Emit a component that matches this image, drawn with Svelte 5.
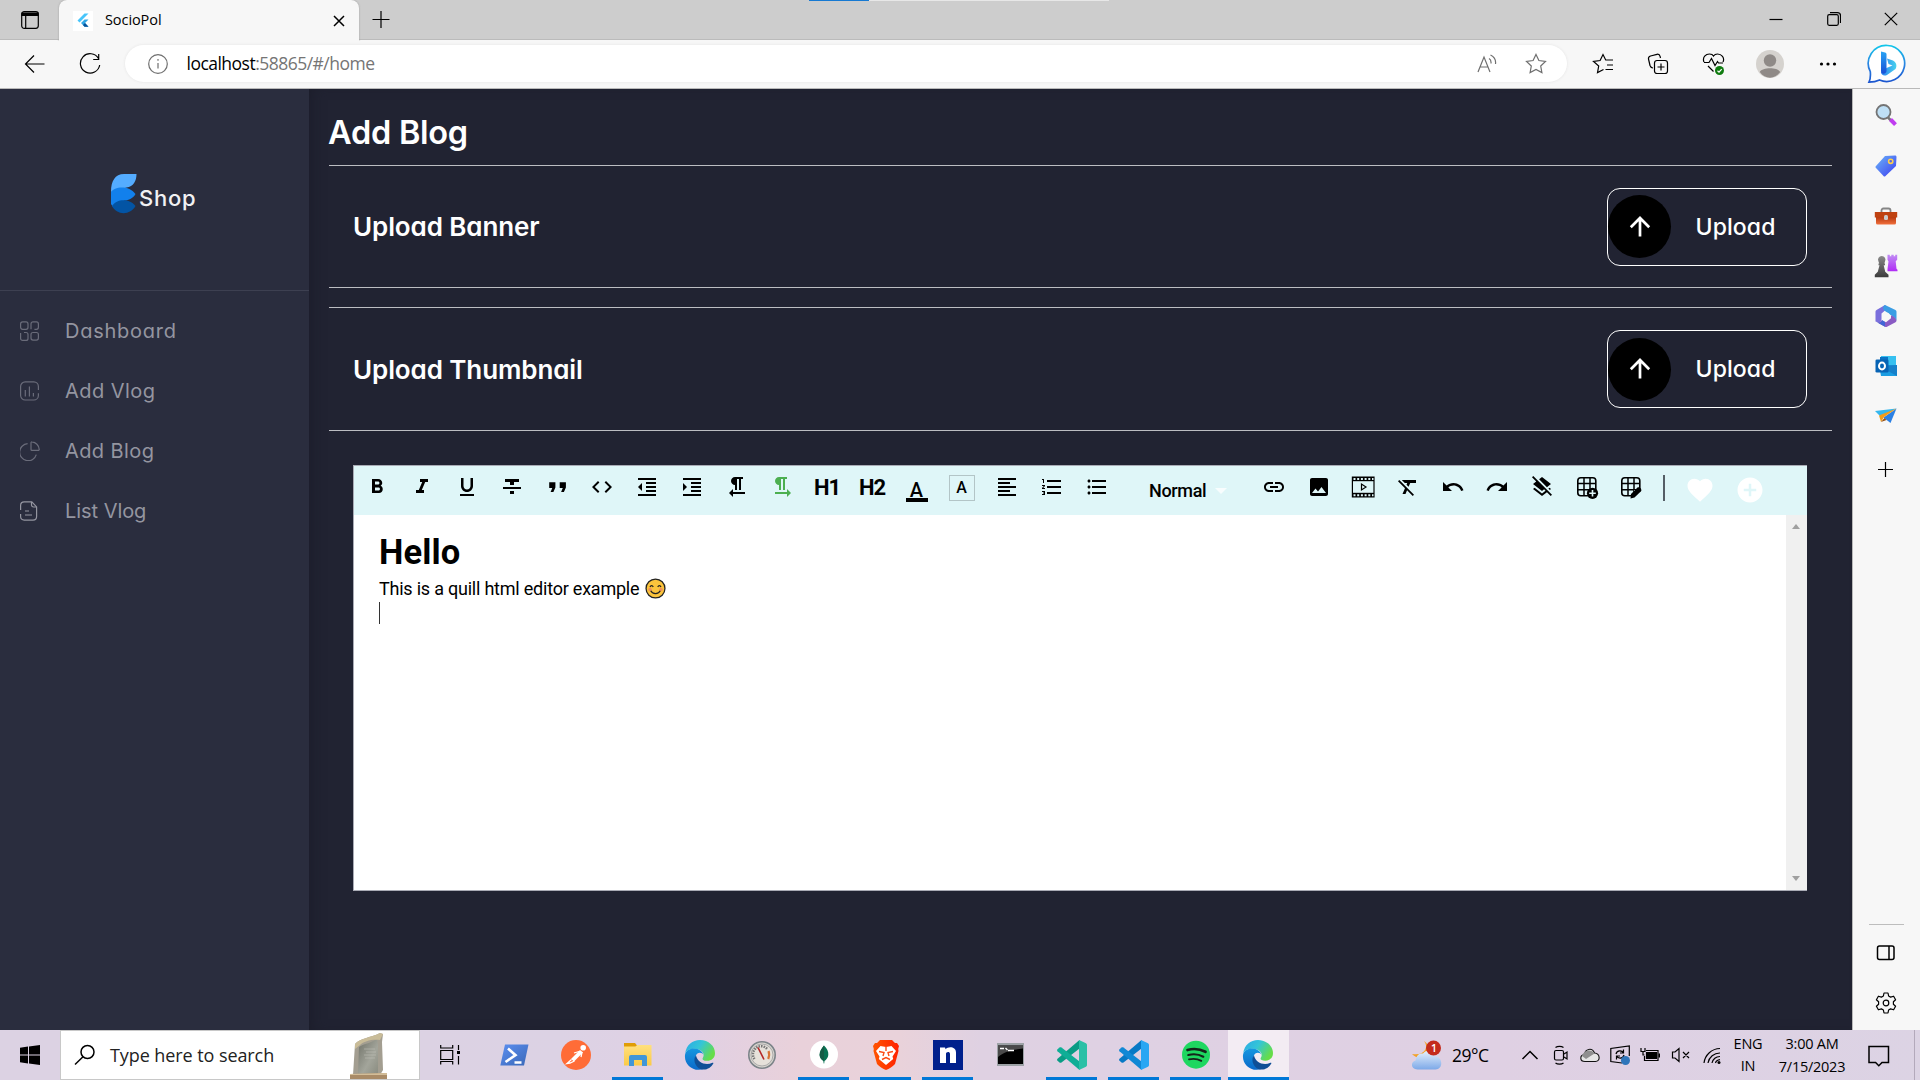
<script>
  const menu = [
    { label: 'Dashboard', icon: 'grid', track: 0.75 },
    { label: 'Add Vlog', icon: 'chart', track: 0.45 },
    { label: 'Add Blog', icon: 'pie', track: 0.4 },
    { label: 'List Vlog', icon: 'doc', track: -0.05 },
  ];

  const tools = [
    { d: 'M15.6 10.79c.97-.67 1.65-1.77 1.65-2.79 0-2.26-1.75-4-4-4H7v14h7.04c2.09 0 3.71-1.7 3.71-3.79 0-1.52-.86-2.82-2.15-3.42zM10 6.5h3c.83 0 1.5.67 1.5 1.5s-.67 1.5-1.5 1.5h-3v-3zm3.5 9H10v-3h3.5c.83 0 1.5.67 1.5 1.5s-.67 1.5-1.5 1.5z' },
    { d: 'M10 4v3h2.21l-3.42 8H6v3h8v-3h-2.21l3.42-8H18V4z' },
    { d: 'M12 17c3.31 0 6-2.69 6-6V3h-2.5v8c0 1.93-1.57 3.5-3.5 3.5S8.5 12.93 8.5 11V3H6v8c0 3.31 2.69 6 6 6zm-7 2v2h14v-2H5z' },
    { d: 'M10 19h4v-3h-4v3zM5 4v3h5v3h4V7h5V4H5zM3 14h18v-2H3v2z' },
    { d: 'M4.2 7.2h6.2v5.3l-2 4.500H5.600l1.700-4.100H4.200zM14.700 7.200h6.200v5.300l-2 4.500h-2.800l1.700-4.100h-3.100z' },
    { d: 'M9.4 16.6L4.8 12l4.6-4.6L8 6l-6 6 6 6 1.4-1.4zm5.2 0l4.6-4.6-4.6-4.6L16 6l6 6-6 6-1.4-1.4z' },
    { d: 'M11 17h10v-2H11v2zm-8-5l4 4V8l-4 4zm0 9h18v-2H3v2zM3 3v2h18V3H3zm8 6h10V7H11v2zm0 4h10v-2H11v2z' },
    { d: 'M3 21h18v-2H3v2zM3 8v8l4-4-4-4zm8 9h10v-2H11v2zM3 3v2h18V3H3zm8 6h10V7H11v2zm0 4h10v-2H11v2z' },
    { d: 'M10 10v5h2V4h2v11h2V4h2V2h-8C7.79 2 6 3.79 6 6s1.79 4 4 4zm-2 7v-3l-4 4 4 4v-3h12v-2H8z' },
    { d: 'M9 10v5h2V4h2v11h2V4h2V2H9C6.79 2 5 3.79 5 6s1.79 4 4 4zm12 8l-4-4v3H5v2h12v3l4-4z', green: true },
    { text: 'H1' },
    { text: 'H2' },
    { swatch: 'under' },
    { swatch: 'box' },
    { d: 'M15 15H3v2h12v-2zm0-8H3v2h12V7zM3 13h18v-2H3v2zm0 8h18v-2H3v2zM3 3v2h18V3H3z' },
    { d: 'M2 17h2v.5H3v1h1v.5H2v1h3v-4H2v1zm1-9h1V4H2v1h1v3zm-1 3h1.8L2 13.1v.9h3v-1H3.2L5 10.9V10H2v1zm5-6v2h14V5H7zm0 14h14v-2H7v2zm0-6h14v-2H7v2z' },
    { d: 'M4 10.5c-.83 0-1.5.67-1.5 1.5s.67 1.5 1.5 1.5 1.5-.67 1.5-1.5-.67-1.5-1.5-1.5zm0-6c-.83 0-1.5.67-1.5 1.5S3.17 7.5 4 7.5 5.5 6.83 5.5 6 4.83 4.5 4 4.5zm0 12c-.83 0-1.5.68-1.5 1.5s.68 1.5 1.5 1.5 1.5-.68 1.5-1.5-.67-1.5-1.5-1.5zM7 19h14v-2H7v2zm0-6h14v-2H7v2zm0-8v2h14V5H7z' },
  ];

  const tools2 = [
    { d: 'M3.9 12c0-1.71 1.39-3.1 3.1-3.1h4V7H7c-2.76 0-5 2.24-5 5s2.24 5 5 5h4v-1.9H7c-1.71 0-3.1-1.39-3.1-3.1zM8 13h8v-2H8v2zm9-6h-4v1.9h4c1.71 0 3.1 1.39 3.1 3.1s-1.39 3.1-3.1 3.1h-4V17h4c2.76 0 5-2.24 5-5s-2.24-5-5-5z' },
    { d: 'M21 19V5c0-1.1-.9-2-2-2H5c-1.1 0-2 .9-2 2v14c0 1.1.9 2 2 2h14c1.1 0 2-.9 2-2zM8.5 13.5l2.5 3.01L14.5 12l4.5 6H5l3.5-4.5z' },
    { icon: 'video' },
    { d: 'M3.27 5L2 6.27l6.97 6.97L6.5 19h3l1.57-3.66L16.73 21 18 19.73 3.55 5.27 3.27 5zM6 5v.18L8.82 8h2.4l-.72 1.68 2.1 2.1L14.21 8H20V5H6z' },
    { d: 'M12.5 8c-2.65 0-5.05.99-6.9 2.6L2 7v9h9l-3.62-3.62c1.39-1.16 3.16-1.88 5.12-1.88 3.54 0 6.55 2.31 7.6 5.5l2.37-.78C21.08 11.03 17.15 8 12.5 8z' },
    { d: 'M18.4 10.6C16.55 8.99 14.15 8 11.5 8c-4.65 0-8.58 3.03-9.96 7.22L3.9 16c1.05-3.19 4.05-5.5 7.6-5.5 1.95 0 3.73.72 5.12 1.88L13 16h9V7l-3.6 3.6z' },
    { d: 'M19.81 14.99l1.19-.92-1.43-1.43-1.19.92 1.43 1.43zm-.45-4.72L21 9l-9-7-2.91 2.27 7.87 7.88 2.4-1.88zM3.27 1L2 2.27l4.22 4.22L3 9l1.63 1.27L12 16l2.1-1.63 1.43 1.43L12 18.54l-7.37-5.73L3 14.07l9 7 4.95-3.85L20.73 21 22 19.73 3.27 1z' },
    { icon: 'tableAdd' },
    { icon: 'tableEdit' },
  ];

  const apps = [
    { icon: 'powershell' },
    { icon: 'postman' },
    { icon: 'folder', open: true },
    { icon: 'edge' },
    { icon: 'gauge' },
    { icon: 'mongo', open: true },
    { icon: 'brave', open: true },
    { icon: 'n', open: true },
    { icon: 'cmd' },
    { icon: 'codeGreen', open: true },
    { icon: 'code', open: true },
    { icon: 'spotify', open: true },
    { icon: 'edge', open: true, active: true },
  ];

  const rail = ['lens', 'tag', 'toolbox', 'chess', 'm365', 'outlook', 'plane', 'plus'];
</script>

<svg class="defs" width="0" height="0" aria-hidden="true">
  <defs>
    <linearGradient id="edgeTop" x1="0" y1="0" x2="1" y2=".5"><stop offset="0" stop-color="#2aa8e6" /><stop offset=".5" stop-color="#34c5d8" /><stop offset="1" stop-color="#66dd49" /></linearGradient>
    <linearGradient id="edgeLeft" x1="0" y1="0" x2="0" y2="1"><stop offset="0" stop-color="#1597e0" /><stop offset="1" stop-color="#0b69c9" /></linearGradient>
    <linearGradient id="bingRing" x1="0" y1="0" x2="0" y2="1"><stop offset="0" stop-color="#12c6ea" /><stop offset=".5" stop-color="#2a86e2" /><stop offset="1" stop-color="#1b55cf" /></linearGradient>
    <linearGradient id="bingStem" x1="0" y1="0" x2="0" y2="1"><stop offset="0" stop-color="#27a4f5" /><stop offset="1" stop-color="#1a4fd6" /></linearGradient>
    <linearGradient id="bingBowl" x1="0" y1="0" x2="1" y2="0"><stop offset="0" stop-color="#2d7ff0" /><stop offset="1" stop-color="#48d3ee" /></linearGradient>
    <linearGradient id="tagFill" x1="0" y1="0" x2="1" y2="1"><stop offset="0" stop-color="#6bb6f8" /><stop offset="1" stop-color="#3c3cf0" /></linearGradient>
    <linearGradient id="boxFill" x1="0" y1="0" x2="0" y2="1"><stop offset="0" stop-color="#b5380f" /><stop offset="1" stop-color="#f2703c" /></linearGradient>
    <linearGradient id="pawn" x1="0" y1="0" x2="0" y2="1"><stop offset="0" stop-color="#8a8a8a" /><stop offset="1" stop-color="#3c3c3c" /></linearGradient>
    <linearGradient id="rook" x1="0" y1="0" x2="0" y2="1"><stop offset="0" stop-color="#c08cf4" /><stop offset="1" stop-color="#b02cf5" /></linearGradient>
    <linearGradient id="cloudFill" x1="0" y1="0" x2="0" y2="1"><stop offset="0" stop-color="#e8f2fd" /><stop offset="1" stop-color="#7da9e8" /></linearGradient>
    <linearGradient id="folderFill" x1="0" y1="0" x2="0" y2="1"><stop offset="0" stop-color="#ffe07e" /><stop offset="1" stop-color="#fbca46" /></linearGradient>
    <linearGradient id="psFill" x1="0" y1="0" x2="1" y2="1"><stop offset="0" stop-color="#5b8ff0" /><stop offset="1" stop-color="#3a68b8" /></linearGradient>
    <linearGradient id="braveFill" x1="0" y1="0" x2="1" y2="0"><stop offset="0" stop-color="#ff5500" /><stop offset="1" stop-color="#ff2000" /></linearGradient>
    <linearGradient id="stoneFill" x1="0" y1="0" x2="1" y2="1"><stop offset="0" stop-color="#6f7167" /><stop offset=".6" stop-color="#a3a59b" /><stop offset="1" stop-color="#8a8c80" /></linearGradient>
  </defs>
</svg>

{#snippet icon(name)}
  {#if name === 'grid'}
    <svg width="20" height="20" viewBox="0 0 20 20" class="line dim"><rect x=".6" y=".9" width="7.4" height="7.4" rx="2" /><path d="M11 8.300V2.900a2 2 0 0 1 2-2h3.400a2 2 0 0 1 2 2v3.400a2 2 0 0 1-2 2h-2M.6 12v5.400a2 2 0 0 0 2 2H6a2 2 0 0 0 2-2V13.500a2 2 0 0 0-2-2H4" /><rect x="11" y="11.500" width="7.400" height="7.600" rx="2" /></svg>
  {:else if name === 'chart'}
    <svg width="20" height="20" viewBox="0 0 20 20" class="line dim"><path d="M18.400 9V5.500A4.600 4.600 0 0 0 13.800.9H5.200A4.600 4.600 0 0 0 .6 5.500v8.800A4.600 4.600 0 0 0 5.200 19h8.600a4.600 4.600 0 0 0 4.600-4.600v-2.100" /><path d="M5.300 9v6.500M9.400 5.500v10M13.400 12v3.500" /></svg>
  {:else if name === 'pie'}
    <svg width="20" height="20" viewBox="0 0 20 20" class="line dim"><path d="M11 1.800C11 1.200 11.400.8 12 .9a8 8 0 0 1 7.200 7.300c.1.600-.4 1.200-1 1.200h-6.200a1 1 0 0 1-1-1z" /><path d="M7.600 2.700A8.500 8.500 0 1 0 16.300 13.600" /></svg>
  {:else if name === 'doc'}
    <svg width="20" height="20" viewBox="0 0 20 20" class="line"><path d="M.6 9V4.500C.6 2.400 2 .9 4.200.9h7.600l4.800 5v9.600c0 2.200-1.400 3.600-3.600 3.600H4.200c-2.200 0-3.600-1.400-3.600-3.600V13" /><path d="M11.500 1v3a2 2 0 0 0 2 2h3M5 10h4M5 14h7" /></svg>
  {:else if name === 'video'}
    <svg width="24" height="24" viewBox="0 0 24 24"><path d="M.8 1.500h22.800v21H.8z" /><path class="cyan" d="M2 6.200h20.400v11.600H2z" /><path d="M2.500 4h20" stroke="#dff6f8" stroke-width="2" stroke-dasharray="2 1.700" /><path d="M2.500 20.200h20" stroke="#dff6f8" stroke-width="2" stroke-dasharray="2 1.700" /><path d="M10.500 9v6l4.500-3z" class="cyan" stroke="#000" stroke-width="1.200" /></svg>
  {:else if name === 'tableAdd' || name === 'tableEdit'}
    <svg width="24" height="24" viewBox="0 0 24 24"><rect x="2.800" y="2.800" width="18" height="18" rx="3" fill="none" stroke="#000" stroke-width="1.600" /><path d="M3 8.500h18M3 14.800h18M9 3v18M15 3v18" stroke="#000" stroke-width="1.500" />
      {#if name === 'tableAdd'}<circle cx="17.500" cy="18.300" r="5.600" /><path d="M17.500 15v6.600M14.200 18.300h6.600" stroke="#dff6f8" stroke-width="1.600" />{:else}<path d="M15 15h8v8h-8z" class="cyan" /><path d="M11.500 23.500l.5-4.500 6.500-6.500c1.500-1.300 5 1.500 3.500 3.800l-6.500 6.200z" />{/if}
    </svg>
  {:else if name === 'edge'}
    <svg width="32" height="32" viewBox="0 0 32 32"><path d="M1.200 14C2.500 6 8.500 1 16 1c8.500 0 15 6 15 13.200 0 4.600-3.500 7.600-7.800 7.600-3.800 0-5.500-1.500-4.200-3.400 1.500-2.200.5-6-3-7.400C10 8.500 4 9.800 1.200 14z" fill="url(#edgeTop)" /><path d="M1 16c.5-4 4.500-6.500 9-6.500 5 0 9 3 9.400 6.600-.8-2.800-6.400-3.600-7.600 1-1.200 5 3 13 9 12.400C10 34 0 26 1 16z" fill="url(#edgeLeft)" /><path d="M12 16.500c-3 3.500-1.500 9.500 2.500 12.500 5.500 3.500 12 .8 14.800-4.500.3-.7-.3-1-.9-.7C21.500 27 13.500 23.500 12 16.500z" fill="#104f96" /></svg>
  {:else if name === 'powershell'}
    <svg width="32" height="32" viewBox="0 0 32 32"><path d="M7 5.500h23.500l-4.500 21H2.300z" fill="url(#psFill)" /><path d="M10 9.500l7.500 6.700-10 6.800M16.500 23.500h7" fill="none" stroke="#fff" stroke-width="2.600" /></svg>
  {:else if name === 'postman'}
    <svg width="32" height="32" viewBox="0 0 32 32"><circle cx="16" cy="16" r="15" fill="#ff6c37" /><circle cx="23.200" cy="8.800" r="2.800" fill="#fff" /><path d="M20 11l3 2.500-9 9-3-2.500z" fill="#fff" /><path d="M11.500 20.500L7 24.500l3-.5 4.500-2M14 14l5-1.500M22 13l-1 5" fill="none" stroke="#fff" stroke-width="1.300" /></svg>
  {:else if name === 'folder'}
    <svg width="32" height="32" viewBox="0 0 32 32"><path d="M2 4h11l2 2.500-2 2H2z" fill="#e09d05" /><path d="M2 7.500h11.500L15.500 6h14v20.500H2z" fill="url(#folderFill)" /><path d="M7 27V18a2 2 0 0 1 2-2h14a2 2 0 0 1 2 2v9h-5v-6h-8v6z" fill="#4096d8" /></svg>
  {:else if name === 'gauge'}
    <svg width="32" height="32" viewBox="0 0 32 32"><circle cx="16" cy="16" r="13.200" fill="#d8d5cf" stroke="#7c8489" stroke-width="1.600" /><circle cx="16" cy="16" r="11" fill="#e6e1da" stroke="#aaa" /><path d="M8.500 20a8 8 0 0 1 13-9.500" fill="none" stroke="#777" stroke-width="2.500" stroke-dasharray="1.500 1" /><path d="M22.500 12c1 2.500.8 5-.3 8" fill="none" stroke="#d87436" stroke-width="2.200" /><path d="M12 8.500l6 12" stroke="#b52626" stroke-width="1.600" /></svg>
  {:else if name === 'mongo'}
    <svg width="32" height="32" viewBox="0 0 32 32"><circle cx="16" cy="15.500" r="14" fill="#fff" /><path d="M16 6.500c3 3 4.700 6 4.300 9.500-.3 2.800-2 4.700-3.800 6l-.3 2.500h-.5l-.4-2.500C13 20.500 11.700 18.500 11.600 16c0-3.800 2-6.500 4.400-9.500z" fill="#087252" /><path d="M16 6.500v15.500c-1.700-1-4.300-3-4.400-6 0-3.800 2-6.500 4.400-9.500z" fill="#155c45" /></svg>
  {:else if name === 'brave'}
    <svg width="32" height="32" viewBox="0 0 32 32"><path d="M10 1h12l3 3h2l2 3-.8 3 .3 2-3.500 13c-2 2.500-6 5-9 6-3-1-7-3.500-9-6L3.500 12l.3-2L3 7l2-3h2z" fill="url(#braveFill)" /><path d="M10.500 7l5.500 1 5.500-1 4.500 5-3.500 5.500.7 2.500-7.200 6-7.200-6 .7-2.500L6 12z" fill="#fff" /><path d="M9 12.500l5 1-1 3.500M23 12.500l-5 1 1 3.500M12 20.500l4-2 4 2M16 8v4" fill="none" stroke="#fb4a16" stroke-width="1.400" /></svg>
  {:else if name === 'n'}
    <svg width="32" height="32" viewBox="0 0 32 32"><path fill="#00208c" d="M1 1h30v30H1z" /><path d="M8 8.500h5l.7 1.700C16 7.300 24 7.300 24 13.500V24h-6v-9c0-2.700-4-2.500-4 0v9H8z" fill="#fff" /></svg>
  {:else if name === 'cmd'}
    <svg width="32" height="32" viewBox="0 0 32 32"><path fill="#9da2a6" d="M3 4h27v23H3z" /><path fill="#000" d="M4 6.500h25V25H4z" /><path d="M4 6.500h25v3C17 11 10 13 4 18z" fill="#4a4a4a" /><path d="M6 9.500h4M11.500 9l2 2M14 11.500h6" stroke="#fff" stroke-width="1.400" fill="none" /></svg>
  {:else if name === 'code' || name === 'codeGreen'}
    <svg width="32" height="32" viewBox="0 0 32 32" class:green={name === 'codeGreen'}><path class="c1" d="M23.500 1v8.500L5.500 23.500c-.8.500-1.500.4-2 0L1.500 21.700c-.7-.7-.5-1.500 0-2z" /><path class="c2" d="M23.500 31v-8.500L5.500 8.500c-.8-.5-1.500-.4-2 0L1.500 10.300c-.7.700-.5 1.500 0 2z" /><path class="c3" d="M23 1l7 3.200c.6.300 1 .9 1 1.500v20.600c0 .6-.4 1.200-1 1.500L23 31z" /></svg>
  {:else if name === 'spotify'}
    <svg width="32" height="32" viewBox="0 0 32 32"><circle cx="16" cy="15.700" r="14" fill="#1ed760" /><g fill="none" stroke="#14241a" stroke-linecap="round"><path d="M7.500 11c6-1.700 12.500-1 18 1.800" stroke-width="2.700" /><path d="M8.300 16c5-1.300 10.500-.8 15 1.700" stroke-width="2.200" /><path d="M9 20.400c4.500-1 8.500-.6 12.300 1.500" stroke-width="1.800" /></g></svg>
  {:else if name === 'lens'}
    <svg width="24" height="24" viewBox="0 0 24 24"><path d="M14 14.500l3 3" stroke="#777" stroke-width="2.500" /><path d="M16.500 16.500l5 5.200" stroke="#c03df0" stroke-width="4" /><circle cx="9.500" cy="9" r="7" fill="#bfe0f6" stroke="#747474" stroke-width="1.800" /></svg>
  {:else if name === 'tag'}
    <svg width="24" height="24" viewBox="0 0 24 24"><path d="M11 2l10-.5c1 0 1.500.6 1.500 1.600L22 12 11.500 22c-.7.700-1.400.7-2 0L2 14c-.7-.7-.7-1.300 0-2z" fill="url(#tagFill)" /><circle cx="16.700" cy="7.300" r="2.100" fill="#5564e8" stroke="#ffd04a" stroke-width="1.600" /></svg>
  {:else if name === 'toolbox'}
    <svg width="24" height="24" viewBox="0 0 24 24"><path d="M7.500 7V5.500c0-1.300.7-2 2-2h5c1.300 0 2 .7 2 2V7" fill="none" stroke="#858585" stroke-width="1.800" /><path d="M2 12h20v6a1.500 1.500 0 0 1-1.500 1.500h-17A1.500 1.500 0 0 1 2 18z" fill="url(#boxFill)" /><path d="M.8 7h22.400v5.500H.8z" fill="#bf4211" /><rect x="10" y="10" width="4" height="5" rx="1.500" fill="#cbcbcb" /></svg>
  {:else if name === 'chess'}
    <svg width="24" height="24" viewBox="0 0 24 24"><path d="M13.500.8h2.300v1.500h1.500V.8h2.400v1.500h1.500V.8h2v5l-1.500 1.500.8 7.500 1 1v1.500h-10V15l1-7.500-1-1.700z" fill="url(#rook)" /><path d="M4.500 7.500a3.700 3.700 0 1 1 6.500 0l-.7 2h.7v1.700h-1.300l1.500 6.500 3.300 3v2.600H.8v-2.600l3-3 1.700-6.500H4.500V9.500h.7z" fill="url(#pawn)" /></svg>
  {:else if name === 'm365'}
    <svg width="24" height="24" viewBox="0 0 24 24"><path d="M11 1L2.500 6C1.800 6.500 1.500 7 1.500 8v9.500c2.500 1.500 6 1 6-2V9.500L11 6.500c2-1.500 2-4 0-5.500z" fill="#7a6fdc" /><path d="M11 1l10.500 5c.7.500 1 1 1 2v8.500c-2-3.500-5-5-6-5.500L11 7C8 5 9 2 11 1z" fill="#3a9de4" /><path d="M22.500 16.500c0 .8-.4 1.300-1 1.700L13 22.700c-.7.300-1.400.3-2 0L3 18.200c2.500.5 4.500-1 4.500-2l4.500 2 5-4v-3c3 1 5 3 5.500 5.300z" fill="#8a5bc4" /><path d="M8 16c0 2-2.500 3.500-5.500 2L11 22.700V18z" fill="#4265d5" /><circle cx="12.200" cy="12.300" r="3.800" fill="#f7f7f7" /></svg>
  {:else if name === 'outlook'}
    <svg width="24" height="24" viewBox="0 0 24 24"><path fill="#36c0f0" d="M7 2h15v10H7z" /><path fill="#0a73c5" d="M6 3h8v8H6z" /><path fill="#1b9de2" d="M5 11h18v11H7z" /><path d="M5 12l18 10V11z" fill="#1680ca" /><rect x="1.500" y="5.500" width="13" height="13" rx="1.300" fill="#0864b5" /><ellipse cx="8" cy="12" rx="3" ry="3.400" fill="none" stroke="#fff" stroke-width="2" /></svg>
  {:else if name === 'plane'}
    <svg width="24" height="24" viewBox="0 0 24 24"><path d="M1 7l21.500-2.500L7 13z" fill="#35b7ee" /><path d="M22.500 4.500L16.500 19l-7-5.500z" fill="#2b80e4" /><path d="M22.500 4.500L5 11.500l2 6.500 3-5z" fill="#f39c19" /><path d="M7 18l3.500-4 2 2z" fill="#934f15" /></svg>
  {:else if name === 'plus'}
    <svg width="24" height="24" viewBox="0 0 24 24" class="stroke"><path d="M11.500 4v15M4 11.500h15" /></svg>
  {/if}
{/snippet}

{#snippet tool(t)}
  <button class="tool" class:go={t.green}>
    {#if t.d}
      <svg width="24" height="24" viewBox="0 0 24 24"><path d={t.d} /></svg>
    {:else if t.text}
      <b class="hx">{t.text}</b>
    {:else if t.swatch}
      <span class="swatch {t.swatch}">A</span>
    {:else}
      {@render icon(t.icon)}
    {/if}
  </button>
{/snippet}

{#snippet uploadRow(title, cls)}
  <section class="row {cls}">
    <h2>{title}</h2>
    <button class="upload">
      <span class="disc"><svg width="24" height="24" viewBox="0 0 24 24"><path d="M12 21.500V4M2.800 12.200L12 3l9.200 9.200" /></svg></span>
      <span class="uplabel">Upload</span>
    </button>
  </section>
{/snippet}

<div class="screen">
  <header class="tabs">
    <div class="loader"></div>
    <div class="tabmenu">
      <svg width="20" height="20" viewBox="0 0 20 20" class="stroke"><rect x="1.700" y="1.700" width="16.600" height="16.600" rx="2.500" /><path d="M2 3h16v2.500H2z" fill="#000" /><path d="M5.700 5v13" /></svg>
    </div>
    <div class="tab">
      <span class="favicon"><svg width="20" height="20" viewBox="0 0 20 20"><path d="M11.500 2.500h4L6.500 11.500l-2-2z" fill="#47c5fb" /><path d="M11.500 8.500h4L12 12l3.500 3.700h-4L8 12z" fill="#32a7e4" /><path d="M10 14l2-2 3.500 3.700h-4z" fill="#08539b" /></svg></span>
      <span class="tabname">SocioPol</span>
      <svg width="12" height="12" viewBox="0 0 12 12" class="stroke thick"><path d="M1 1l10 10M11 1L1 11" /></svg>
    </div>
    <svg class="newtab stroke" width="18" height="18" viewBox="0 0 18 18"><path d="M.5 8.500h17M9 0v17" /></svg>
    <div class="winbtns">
      <svg width="14" height="14" viewBox="0 0 14 14" class="stroke"><path d="M.5 7.500h13" /></svg>
      <svg width="14" height="14" viewBox="0 0 14 14" class="stroke"><rect x=".7" y="2.700" width="10.600" height="10.600" rx="1.500" /><path d="M3 .7h7.500a3 3 0 0 1 3 3V11" /></svg>
      <svg width="14" height="14" viewBox="0 0 14 14" class="stroke"><path d="M.8.8l12.400 12.400M13.200.8L.8 13.200" /></svg>
    </div>
  </header>

  <nav class="addr">
    <svg class="back stroke" width="22" height="20" viewBox="0 0 22 20"><path d="M20.500 10H1.500M10 1.500L1.500 10l8.500 8.500" /></svg>
    <svg class="reload stroke" width="22" height="22" viewBox="0 0 22 22"><path d="M19.500 5.500A9.700 9.700 0 1 0 20.700 12M19.700 1v5.500h-5.500" /></svg>
    <div class="pill">
      <svg width="20" height="20" viewBox="0 0 20 20" class="stroke grey"><circle cx="10" cy="10" r="9.300" /><path d="M10 9v5.500M10 5v1.700" /></svg>
      <span class="url">localhost<i>:58865/#/home</i></span>
      <svg class="aloud stroke grey" width="20" height="20" viewBox="0 0 20 20"><path d="M1 18L7 3l6 15M3.300 13h7.500M12 4.500c1.800 1 2.300 2.500 2 5M13.500 1c4 2 5.500 5.500 5 9" /></svg>
      <svg width="22" height="22" viewBox="0 0 22 22" class="stroke grey"><path d="M11 1.500l2.900 6 6.600.9-4.800 4.600 1.200 6.600-5.900-3.200-5.900 3.200L6.300 13 1.500 8.400l6.600-.9z" /></svg>
    </div>
    <div class="navicons">
      <svg width="22" height="22" viewBox="0 0 22 22" class="stroke"><path d="M11.500 16.500l-6 3.100L6.700 13 1.500 8.400l6.600-.9L11 1.500l2.700 5.500H21M15 12h6M13.500 16.500H21" /></svg>
      <svg width="22" height="22" viewBox="0 0 22 22" class="stroke"><rect x="7.500" y="7.500" width="13" height="13" rx="2.500" /><path d="M14 10.500v7M10.500 14h7M6 15c-2 0-2.500-1-3-2.500L1.500 6c-.3-1.500.5-2.500 2-3L10 1.300c1.600-.3 2.700.5 3.100 2l.4 1.700" /></svg>
      <svg width="24" height="24" viewBox="0 0 24 24" class="stroke"><path d="M2 10C0 5 4 2 7.500 2c2 0 3.500 1 4 2 .7-1 2-2 4-2 4 0 7.500 3.500 5.500 8M2 10.500h5l2.500-4 3.500 7 2.500-4 1 1.500H21M6 14l5.500 5.500" /><circle cx="17.500" cy="18.500" r="4.500" fill="#107c10" stroke="none" /><path d="M15.500 18.800l1.500 1.300 2.700-3" stroke="#fff" /></svg>
      <svg class="avatar" width="28" height="28" viewBox="0 0 28 28"><circle cx="14" cy="14" r="14" fill="#d5d2ce" /><circle cx="14" cy="10.500" r="6.200" fill="#8f8a87" /><path d="M3.800 22c2.500-5 18-5 20.400 0-5 7.500-15.400 7.500-20.400 0z" fill="#8f8a87" /></svg>
      <svg width="18" height="6" viewBox="0 0 18 6"><circle cx="2.500" cy="3" r="1.600" /><circle cx="9" cy="3" r="1.600" /><circle cx="15.500" cy="3" r="1.600" /></svg>
    </div>
    <svg class="bing" width="40" height="40" viewBox="0 0 40 40"><path d="M20.500 1.500a18 18 0 1 1-8 34.500c-3 1.500-6.500 2.200-10.500 2.200 1.500-3 1.700-6 1.300-10.500A18 18 0 0 1 20.500 1.500z" fill="#fff" stroke="url(#bingRing)" stroke-width="1.700" /><path d="M14 28l5.500-4 6-2.500-4-1.500-1.500-5.500 6 2c3 1.500 4.500 5 2.500 8.500L20 31c-3 1.500-6 0-6-3z" fill="url(#bingBowl)" /><path d="M14 7.500l4 1c1 .4 1.500 1 1.500 2V27c0 3-5.500 4-5.500 0z" fill="url(#bingStem)" /></svg>
  </nav>

  <div class="middle">
    <div class="app">
      <aside>
        <div class="logo">
          <svg width="26" height="40" viewBox="0 0 26 40"><path d="M0 18C0 7 4 0 13 0h12.500c0 7-3 12.500-10 13.500z" fill="#54acff" /><path d="M0 18c3-5.500 18-7.500 24.500 2-2 4-7 6.500-11 6.500L2 33l-2-3z" fill="#1280ec" /><path d="M1 32c5-8 18-7.500 23.500 0-5 9.500-19 9.500-23.500 0z" fill="#0354a4" /></svg>
          <span>Shop</span>
        </div>
        <ul>
          {#each menu as m}
            <li>{@render icon(m.icon)}<span style="letter-spacing:{m.track}px">{m.label}</span></li>
          {/each}
        </ul>
      </aside>
      <main>
        <h1>Add Blog</h1>
        {@render uploadRow('Upload Banner', 'first')}
        {@render uploadRow('Upload Thumbnail', 'second')}
        <div class="editor">
          <div class="toolbar">
            <div class="group">{#each tools as t}{@render tool(t)}{/each}</div>
            <div class="select"><span>Normal</span><i></i></div>
            <div class="group tight">{#each tools2 as t}{@render tool(t)}{/each}</div>
            <span class="bar"></span>
            <svg class="fav" width="30" height="30" viewBox="0 0 24 24"><path d="M12 21.350l-1.450-1.320C5.400 15.360 2 12.280 2 8.500 2 5.420 4.420 3 7.500 3c1.740 0 3.410.81 4.500 2.090C13.090 3.810 14.760 3 16.500 3 19.580 3 22 5.420 22 8.500c0 3.780-3.400 6.860-8.550 11.540L12 21.350z" /></svg>
            <svg class="fav" width="30" height="30" viewBox="0 0 24 24"><path d="M12 2C6.480 2 2 6.480 2 12s4.480 10 10 10 10-4.480 10-10S17.520 2 12 2zm5 11h-4v4h-2v-4H7v-2h4V7h2v4h4v2z" /></svg>
          </div>
          <div class="page">
            <div class="content">
              <h3>Hello</h3>
              <p>This is a quill html editor example
                <svg width="21" height="21" viewBox="0 0 20 20"><circle cx="10" cy="10" r="9" fill="#fcc43c" stroke="#222" stroke-width="1.200" /><circle cx="4.800" cy="11" r="1.700" fill="#f2925a" /><circle cx="15.200" cy="11" r="1.700" fill="#f2925a" /><path d="M4.800 8.500c.6-1.500 2.400-1.500 3 0M12.200 8.500c.6-1.500 2.400-1.500 3 0M5.500 12.200c1.500 3.500 7.500 3.500 9 0" fill="none" stroke="#222" stroke-width="1.200" /></svg>
              </p>
              <div class="caret"></div>
            </div>
            <div class="scroll"><i class="up"></i><i class="down"></i></div>
          </div>
        </div>
      </main>
    </div>
    <div class="rail">
      {#each rail as r}<span>{@render icon(r)}</span>{/each}
      <div class="railend">
        <hr />
        <svg width="20" height="18" viewBox="0 0 20 18" class="stroke thick"><rect x="1.500" y="2" width="16.500" height="13.500" rx="2" /><path d="M13 2v13.500" /></svg>
        <svg width="22" height="22" viewBox="0 0 22 22" class="stroke"><path d="M9 1h4l.6 3 2 1.100 3-.9 2 3.500-2.200 2.100v2.400l2.200 2.100-2 3.500-3-.9-2 1.100L13 21H9l-.6-3-2-1.100-3 .9-2-3.500 2.200-2.100V9.800L1.400 7.700l2-3.500 3 .9 2-1.100z" stroke-linejoin="round" /><circle cx="11" cy="11" r="2.800" /></svg>
      </div>
    </div>
  </div>

  <footer>
    <div class="start"><svg width="20" height="20" viewBox="0 0 20 20"><path d="M0 2.700L8 1.500v8H0zM9 1.400L20 0v9.500H9zM0 10.500h8v8L0 17.300zM9 10.500h11V20L9 18.600z" /></svg></div>
    <div class="search">
      <svg width="22" height="22" viewBox="0 0 22 22" class="stroke thick"><circle cx="13.500" cy="8" r="6.500" /><path d="M9 12.800L1 20.500" /></svg>
      <span>Type here to search</span>
      <svg class="stone" width="38" height="47" viewBox="0 0 38 47"><path d="M5 12c5-6 15-6 25-11l3 1-1 8 1 28-3 5H3z" fill="#a39e91" /><path d="M9 15c6-4 10-3 18-8l1 6v29H8z" fill="url(#stoneFill)" /><path d="M5 12C10 6 20 6 30 1l3 1-3 6c-8-1-16 1-20 5l-5 4z" fill="#c9bc98" /><path d="M14 17h11M16 20h10M14 23h12M15 26h10" stroke="#c4c6bd" stroke-width=".5" /><path d="M0 42l37-1v6H0z" fill="#a98b67" /><path d="M0 42l37-1v2H0z" fill="#d3bd98" /></svg>
    </div>
    <div class="taskview"><svg width="20" height="20" viewBox="0 0 20 20" class="stroke"><path d="M.7 5.500h12v9H.7zM.7 0v3h12V0M.7 19.500v-3h12v3M18.500 0v5M18.500 11v8.500" /><path d="M17 6h3v3h-3z" fill="#000" stroke="none" /></svg></div>
    <div class="apps">
      {#each apps as a}
        <div class="appbtn" class:open={a.open} class:active={a.active}>{@render icon(a.icon)}</div>
      {/each}
    </div>
    <div class="weather">
      <svg width="31" height="31" viewBox="0 0 31 31"><path d="M13 1c5 6 1 15-12 13 2 2 5 4 9 4 8 0 12-11 3-17z" fill="#f3a126" /><path d="M6.500 29.500C0 29.500-1 22 4.500 20.500 5.500 14.500 9 13 12 13.500c4-5 11-3.500 12 2.500 8 .5 8.500 13.500.5 13.500z" fill="url(#cloudFill)" /><circle cx="22.500" cy="8" r="7.500" fill="#c42b1c" /></svg>
      <b>1</b>
      <span>29°C</span>
    </div>
    <div class="tray">
      <svg width="18" height="18" viewBox="0 0 18 18" class="stroke thick"><path d="M1.500 13L9 5.500l7.500 7.500" /></svg>
      <svg width="18" height="20" viewBox="0 0 18 20" class="stroke"><rect x="2.500" y="5.500" width="9" height="9.500" rx="1.500" /><path d="M12 9l3-2v7l-3-2M3.500 2.500c2-1.500 6-1.500 8 0M3.500 18c2 1.500 6 1.500 8 0" /></svg>
      <svg width="20" height="18" viewBox="0 0 20 18"><path d="M5 15.500C-.5 15.500-.5 9 4.500 8.500 5 3 12 1 14.500 7c6 .5 6 8.500 1 8.500z" fill="#e6e6e6" stroke="#111" stroke-width="1.100" /><path d="M2 10c2-7 10-7 12.500-2.500L6 13z" fill="#8f8f8f" /></svg>
      <svg width="20" height="20" viewBox="0 0 20 20" class="stroke"><path d="M12 18L.8 16.500v-13L19.300 1v10M6 9c1-4 6-4 7.500-1M13.500 4.500V8H10M14 10c-1 4-6 4-7.500 1M6.500 14.500V11H10" /><circle cx="15.500" cy="15.500" r="4.500" fill="#2e75ba" stroke="none" /></svg>
      <svg width="20" height="18" viewBox="0 0 20 18" class="stroke"><path d="M6 4.500h12v10H4.500V10M19.400 7.500v4M1 2v3.500h4V2M3 5.500V9h1.500" /><path d="M6.500 6.500h10v6h-10z" fill="#000" /></svg>
      <svg width="20" height="18" viewBox="0 0 20 18" class="stroke"><path d="M1.500 6v6h2.500l4 3.500v-13L4 6zM12 6l6 6M18 6l-6 6" /></svg>
      <svg width="20" height="20" viewBox="0 0 20 20" class="stroke"><path d="M2 18A16.500 16.500 0 0 1 18 3.500M6 18A12 12 0 0 1 18 8M10 18a8 8 0 0 1 8-6.500M13.500 18c.5-2 2-3 4.500-3.300" /><circle cx="17" cy="17.500" r="1.500" fill="#000" stroke="none" /></svg>
    </div>
    <div class="lang"><span>ENG</span><span>IN</span></div>
    <div class="clock"><span>3:00 AM</span><span>7/15/2023</span></div>
    <svg class="note stroke thick" width="22" height="22" viewBox="0 0 22 22"><path d="M1 1.500h19.500v16H14l-3.200 3.200-3.200-3.200H1z" /></svg>
    <div class="peek"></div>
  </footer>
</div>

<style>
  :global(body) { overflow: hidden; }
  * { box-sizing: border-box; }
  svg { display: block; flex: none; }
  button { border: 0; background: none; padding: 0; font: inherit; color: inherit; }
  i { font-style: normal; }
  .defs { position: absolute; }
  .screen { width: 1920px; height: 1080px; display: flex; flex-direction: column; font-family: "Open Sans", "Noto Sans", sans-serif; color: #000; }
  .stroke { fill: none; stroke: #000; stroke-width: 1.2; }
  .thick { stroke-width: 1.5; }
  .grey { stroke: #6f6f6f; }

  .tabs { position: relative; height: 40px; flex: none; background: #cdcdcd; display: flex; align-items: center; border-bottom: 1px solid #bbb; }
  .loader { position: absolute; left: 809px; top: 0; width: 300px; height: 1px; background: linear-gradient(90deg, #1679d2 60px, #e7e7e7 60px); }
  .tabmenu { width: 59px; height: 40px; padding-left: 20px; display: flex; align-items: center; }
  .tab { width: 300px; height: 41px; align-self: flex-start; background: #f7f7f7; border-radius: 8px 8px 0 0; display: flex; align-items: center; padding: 0 14px; box-shadow: 0 0 2px #999; clip-path: inset(0 -3px 0 -3px); }
  .favicon { background: #fff; }
  .tabname { font-size: 14.5px; margin-left: 12px; flex: 1; letter-spacing: -.08px; padding-bottom: 2px; }
  .newtab { margin-left: 13px; }
  .winbtns { margin-left: auto; display: flex; gap: 43.500px; padding: 0 22px 1px 0; }

  .addr { height: 49px; flex: none; background: #f7f7f7; border-bottom: 1px solid #b9b9b9; display: flex; align-items: center; padding: 0 0 1px 24px; }
  .reload { margin-left: 33px; }
  .pill { margin-left: 24px; width: 1442px; height: 37px; border-radius: 19px; background: #fff; box-shadow: 0 0 3px #e3e3e3; display: flex; align-items: center; padding: 0 20px 0 23px; }
  .url { margin-left: 18.500px; font-size: 17.500px; letter-spacing: -.52px; flex: 1; padding-bottom: 1px; }
  .url i { color: #757575; }
  .aloud { margin-right: 28px; }
  .navicons { margin-left: 25px; display: flex; align-items: center; width: 245px; justify-content: space-between; }
  .avatar { margin: 0 2px 0 -2px; }
  .bing { margin-left: 30px; }

  .middle { height: 941px; flex: none; display: flex; }
  .app { width: 1852px; display: flex; background: #212332; font-family: Inter, "Open Sans", sans-serif; font-feature-settings: "cv11"; color: #fff; }
  aside { width: 309px; background: #2a2d3e; }
  .logo { height: 202px; border-bottom: 1px solid #3d4051; display: flex; padding: 85px 0 0 111px; }
  .logo span { font-size: 22px; line-height: 30px; margin: 9px 0 0 2px; color: #f1f1f3; letter-spacing: .75px; font-weight: 500; }
  ul { list-style: none; margin: 10px 0 0; padding: 0; }
  li { height: 60px; display: flex; align-items: center; padding-left: 20px; font-size: 20px; color: #9495a0; }
  li span { margin-left: 25px; white-space: nowrap; }
  .line { fill: none; stroke: #9495a0; stroke-width: 1.2; }
  .dim { stroke: #6a6c7a; }

  main { flex: 1; padding: 0 20px; box-shadow: inset 8px 0 16px -8px #1a1b28; }
  h1 { margin: 0 0 0 -1px; height: 76px; font-size: 32.500px; line-height: 87px; font-weight: 600; letter-spacing: -.25px; }
  .row { border: solid #bcbdc2; border-width: 1px 0; display: flex; align-items: center; justify-content: space-between; padding: 0 25px 0 24px; height: 123px; }
  .row.second { margin-top: 19px; height: 124px; }
  h2 { margin: 0; font-size: 26px; font-weight: 600; letter-spacing: -.1px; }
  .upload { width: 200px; height: 78px; border: 1px solid #fff; border-radius: 13px; display: flex; align-items: center; }
  .disc { width: 63px; height: 63px; border-radius: 50%; background: #000; display: grid; place-items: center; }
  .disc path { fill: none; stroke: #fff; stroke-width: 2.700; }
  .uplabel { font-size: 23px; margin-left: 24.500px; font-weight: 500; letter-spacing: .1px; }

  .editor { margin: 34px 25px 0 24px; height: 426px; border: 1px solid #a9abb5; border-right: 0; background: #fff; font-family: Roboto, sans-serif; color: #000; }
  .toolbar { height: 49px; background: #dff6f8; display: flex; align-items: flex-start; }
  .group { display: flex; width: 765px; }
  .group.tight { width: 402.300px; }
  .tool { flex: 1 1 0; min-width: 0; height: 42px; display: grid; place-items: center; fill: #000; }
  .tool.go { fill: #4caf50; }
  .cyan { fill: #dff6f8; }
  .hx { font-size: 22px; font-weight: 700; letter-spacing: -1px; padding-left: 1px; }
  .swatch { font-size: 16px; font-weight: 500; line-height: 24px; text-align: center; }
  .box { width: 26px; height: 26px; border: 1px solid #b3c5c7; margin-top: 2px; }
  .under { width: 22px; height: 21px; line-height: 18px; font-size: 20px; border-bottom: 4px solid #000; margin-top: 9px; }
  .select { width: 132.500px; height: 49px; padding-left: 30px; display: flex; align-items: center; font-size: 18px; font-weight: 500; letter-spacing: -.35px; }
  .select i { margin-left: 9px; border: 6.500px solid transparent; border-top-color: #f8fdfe; border-bottom: 0; }
  .bar { width: 1.500px; height: 26px; background: #555e66; margin: 9px 0 0 9.500px; }
  .fav { fill: #fff; margin: 9px 0 0 20px; }
  .fav + .fav { margin-left: 20px; }
  .page { height: 375px; display: flex; justify-content: space-between; }
  .content { padding: 13px 0 0 25px; }
  h3 { margin: 0; font-size: 34.500px; line-height: 48px; letter-spacing: .1px; }
  p { margin: 0; font-size: 18px; line-height: 25px; letter-spacing: -.22px; display: flex; gap: 6px; align-items: center; }
  .caret { width: 1px; height: 22px; background: #333; margin-top: 1px; }
  .scroll { width: 21px; background: #f0f0f0; display: flex; flex-direction: column; align-items: center; justify-content: space-between; padding: 9px 2px 9px 0; }
  .up { border: 4px solid transparent; border-bottom: 5px solid #a0a0a0; border-top: 0; }
  .down { border: 4px solid transparent; border-top: 5px solid #a0a0a0; border-bottom: 0; }

  .rail { width: 68px; background: #f7f7f7; border-left: 1px solid #b9b9b9; display: flex; flex-direction: column; align-items: center; padding-right: 1px; }
  .rail span { height: 50px; flex: none; display: grid; place-items: center; }
  .rail span:first-child { margin-top: 1px; height: 51px; padding-bottom: 1px; }
  .rail span:nth-child(3) { padding-top: 1px; }
  .rail span:nth-child(8) { margin-top: 4px; }
  .railend { margin-top: auto; display: flex; flex-direction: column; align-items: center; padding-bottom: 16px; }
  hr { width: 35px; height: 1px; border: 0; background: #bdbdbd; margin: 0 0 19px; }
  .railend svg + svg { margin-top: 30px; }

  footer { height: 50px; flex: none; display: flex; align-items: center; background: linear-gradient(90deg, #dcd2e3 0, #dcd2e3 420px, #dcd2e4 560px, #e0d0e4 690px, #e9d1da 800px, #e9d2da 900px, #dfd1e2 980px, #dfd1e3 1100px, #dfd0e3 1500px, #dcd3e4 1920px); }
  .start { width: 60px; padding-left: 20px; }
  .search { width: 360px; height: 50px; background: #fff; border: 1px solid #c8c8c8; display: flex; align-items: center; padding-left: 13px; }
  .search span { font-size: 18px; margin-left: 14px; color: #222; letter-spacing: -.08px; flex: 1; white-space: nowrap; }
  .stone { margin-right: 31px; align-self: flex-end; }
  .taskview { width: 62px; padding-left: 20px; }
  .apps { display: flex; height: 50px; }
  .appbtn { width: 62px; height: 50px; display: grid; place-items: center; border: solid transparent; border-width: 0 5px 0 6px; position: relative; }
  .open::after { content: ""; position: absolute; left: 0; right: 0; bottom: 0; height: 3px; background: #0078d7; }
  .active { border-width: 0; background: #f3ecf3; width: 61px; margin-left: 2px; }
  .active svg { margin-right: 1px; }
  .c1 { fill: #0879c5; } .c2 { fill: #1188d5; } .c3 { fill: #29a6f3; }
  .green .c1 { fill: #0a9c85; } .green .c2 { fill: #0fae96; } .green .c3 { fill: #2bc0a6; }
  .weather { position: relative; margin-left: 122px; width: 110px; display: flex; align-items: center; font-size: 17.500px; letter-spacing: -.5px; }
  .weather span { margin-left: 10px; }
  .weather b { position: absolute; left: 20px; top: 2px; font-size: 10.500px; line-height: 13px; color: #fff; font-weight: 600; }
  .tray { display: flex; align-items: center; width: 201px; justify-content: space-between; }
  .tray svg:nth-child(2) { margin: 0 -2px 0 2px; }
  .tray svg:nth-child(3), .tray svg:nth-child(4) { margin: 0 -1px 0 1px; }
  .lang { width: 32px; margin-left: 10px; text-align: center; font-size: 14.500px; display: flex; flex-direction: column; line-height: 22px; letter-spacing: -.25px; }
  .clock { width: 70px; margin-left: 13px; text-align: center; font-size: 14.500px; display: flex; flex-direction: column; line-height: 23px; letter-spacing: -.25px; }
  .note { margin: 2px 0 0 21px; }
  .peek { margin-left: auto; width: 6px; height: 50px; border-left: 1px solid #b3a9bb; }
</style>
